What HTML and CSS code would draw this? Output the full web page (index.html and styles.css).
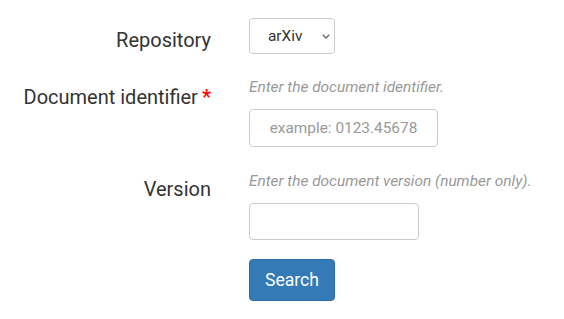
FILE: index.html
```html
<!DOCTYPE html>
<html lang="en">
<head>
<meta charset="utf-8">
<title>Search</title>
<link rel="stylesheet" href="styles.css">
</head>
<body>
<form class="form">
  <div class="row row-repo">
    <label class="label" for="repo">Repository</label>
    <div class="control">
      <div class="select-wrap">
        <select id="repo" class="select">
          <option>arXiv</option>
        </select>
        <svg class="chevron" width="8" height="5" viewBox="0 0 8 5" aria-hidden="true">
          <path d="M0.8 0.8 L4 4 L7.2 0.8" fill="none" stroke="#666" stroke-width="1.3"/>
        </svg>
      </div>
    </div>
  </div>
  <div class="row row-id">
    <label class="label" for="docid">Document identifier<span class="req">*</span></label>
    <div class="control">
      <p class="help">Enter the document identifier.</p>
      <input id="docid" class="input input-id" type="text" placeholder="example: 0123.45678">
    </div>
  </div>
  <div class="row row-version">
    <label class="label" for="ver">Version</label>
    <div class="control">
      <p class="help">Enter the document version (number only).</p>
      <input id="ver" class="input input-ver" type="text">
    </div>
  </div>
  <div class="row row-submit">
    <div></div>
    <div class="control">
      <button type="submit" class="btn">Search</button>
    </div>
  </div>
</form>
</body>
</html>
```
FILE: styles.css
```css
* { box-sizing: border-box; }
html, body { margin: 0; padding: 0; background: #fff; }
body {
  font-family: Roboto, "Liberation Sans", sans-serif;
  color: #333;
}
.form {
  padding-top: 18px;
}
.row {
  display: grid;
  grid-template-columns: 211px 1fr;
  column-gap: 38px;
  align-items: start;
}
.label {
  text-align: right;
  font-size: 20px;
  line-height: 26px;
  color: #333;
  white-space: nowrap;
}
.row-repo .label { margin-top: 9px; }
.row-id { margin-top: 23px; }
.row-id .label { margin-top: 7px; }
.row-version { margin-top: 24px; }
.row-version .label { margin-top: 5px; }
.row-submit { margin-top: 19px; }
.req {
  color: #f00;
  margin-left: 4px;
  font-weight: bold;
}
.control { display: flex; flex-direction: column; align-items: flex-start; }
.help {
  margin: 0 0 12px 0;
  font-size: 15.4px;
  line-height: 20px;
  font-style: italic;
  color: #999;
}
.select-wrap {
  position: relative;
  width: 86px;
  height: 36px;
}
.select {
  -webkit-appearance: none;
  appearance: none;
  display: block;
  width: 86px;
  height: 36px;
  font-family: Roboto, "Liberation Sans", sans-serif;
  font-size: 15.4px;
  color: #333;
  background: #fff;
  border: 1px solid #ccc;
  border-radius: 4px;
  padding: 0 0 0 18px;
}
.chevron {
  position: absolute;
  left: 73px;
  top: 16px;
  pointer-events: none;
}
.input {
  height: 38px;
  font-family: Roboto, "Liberation Sans", sans-serif;
  font-size: 15.4px;
  color: #333;
  border: 1px solid #ccc;
  border-radius: 4px;
  padding: 6px 12px;
  text-align: center;
  background: #fff;
}
.input::placeholder { color: #999; }
.input-id { width: 189px; }
.input-ver { width: 170px; height: 37px; }
.btn {
  width: 86px;
  height: 42px;
  font-family: Roboto, "Liberation Sans", sans-serif;
  font-size: 17.6px;
  color: #fff;
  background: #337ab7;
  border: 1px solid #2e6da4;
  border-radius: 4px;
  padding: 0;
}
```
